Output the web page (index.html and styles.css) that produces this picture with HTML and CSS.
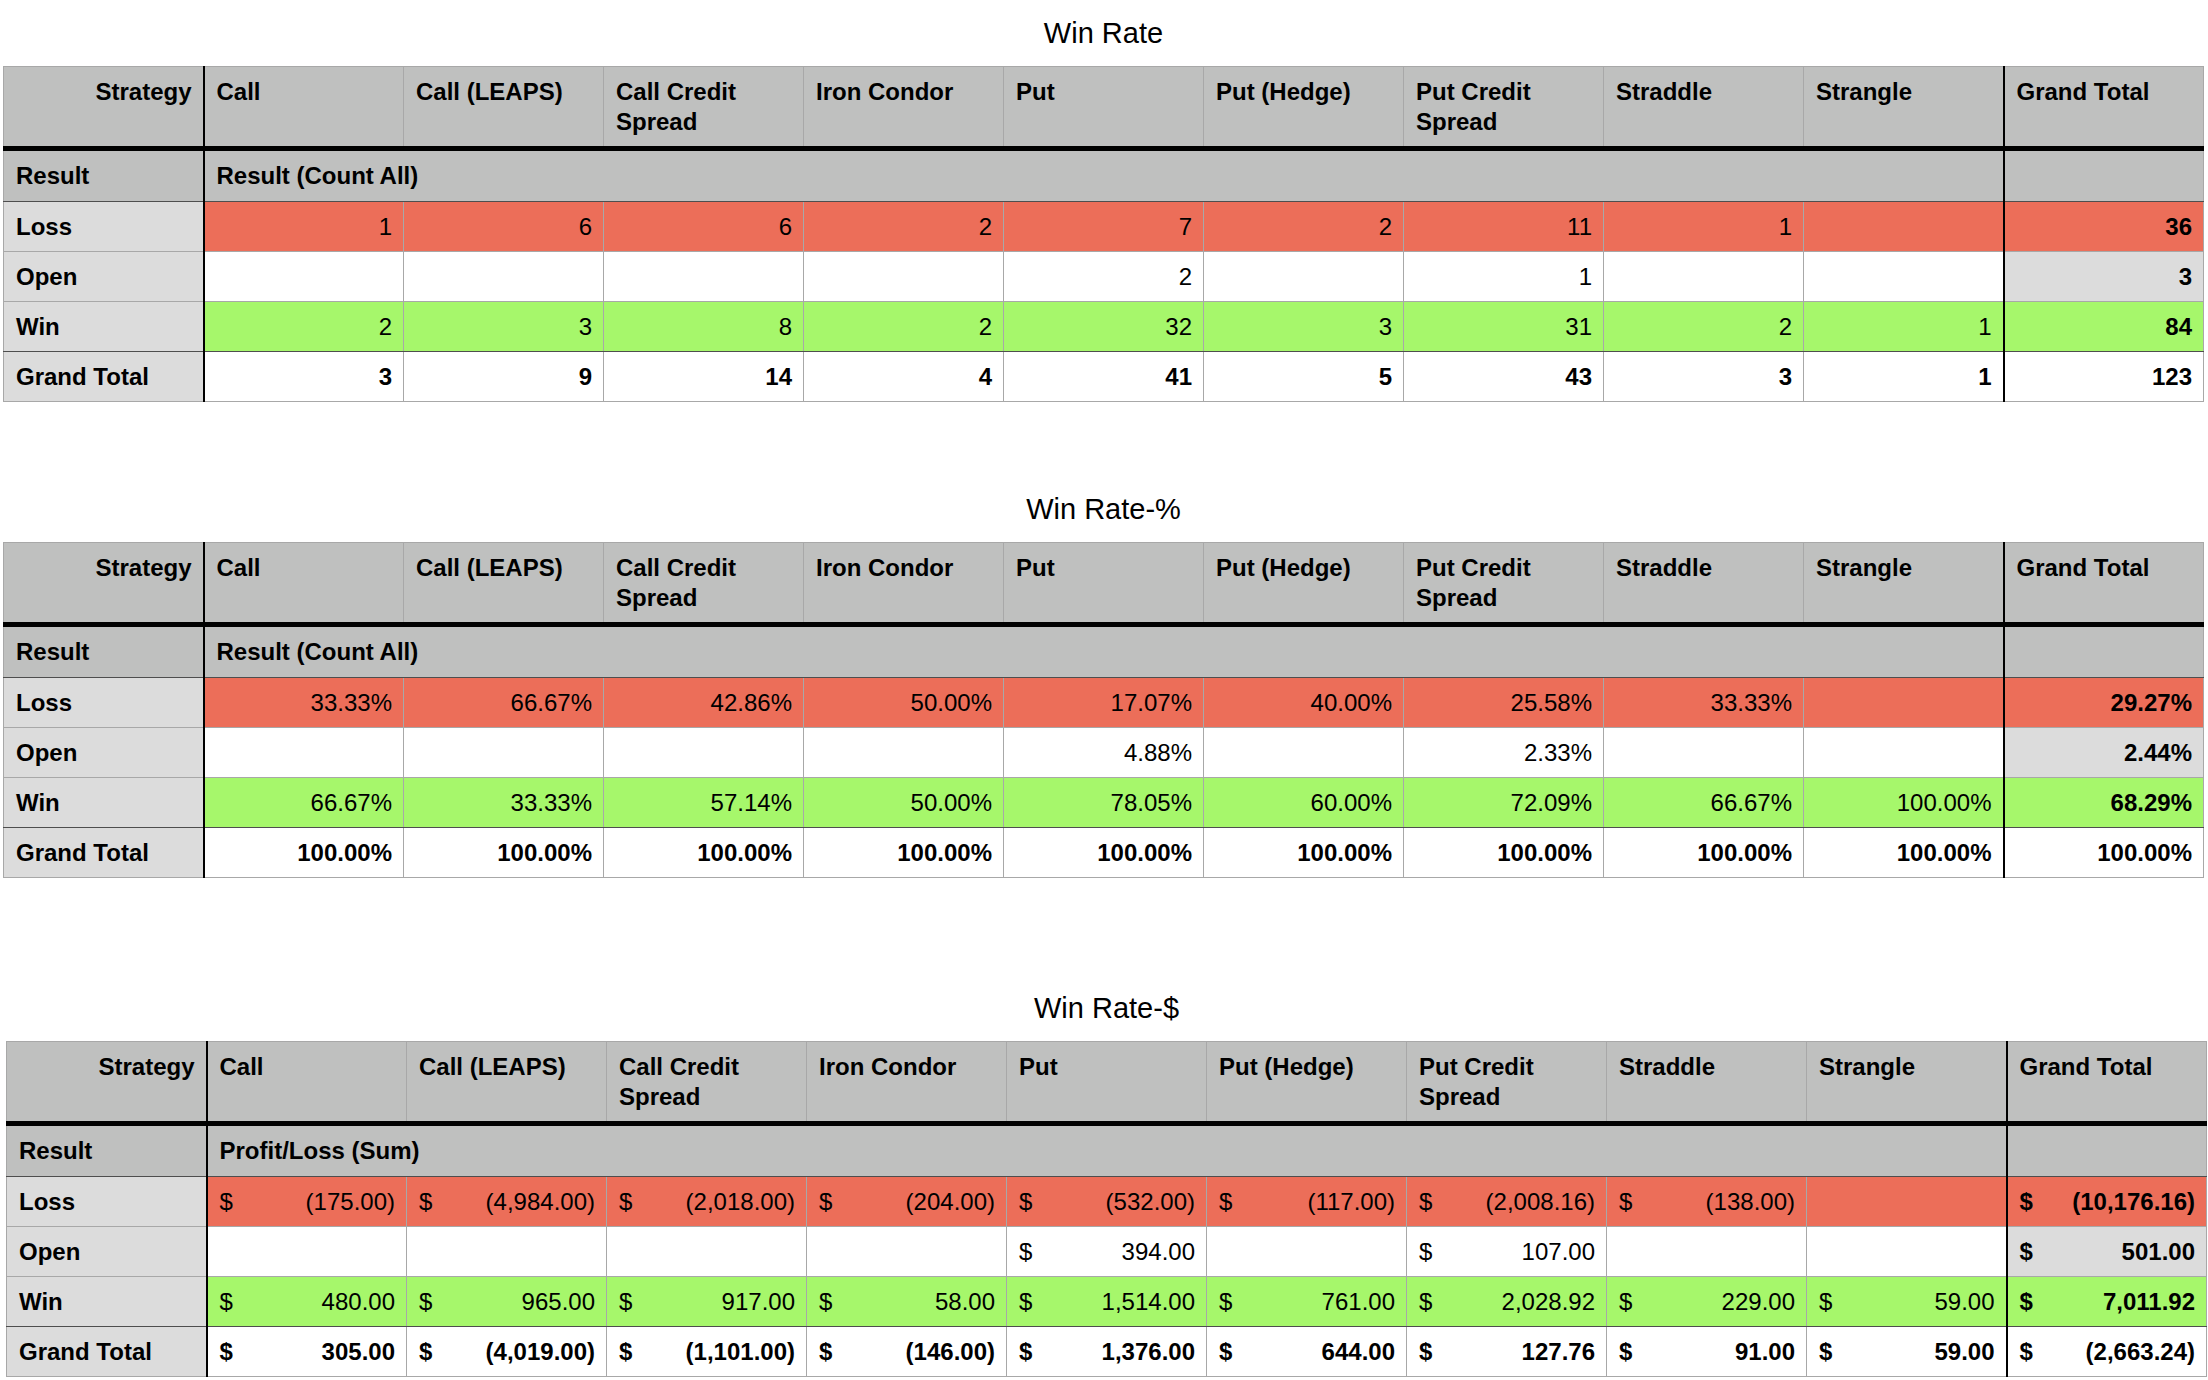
FILE: index.html
```html
<!DOCTYPE html>
<html lang="en">
<head>
<meta charset="utf-8">
<title>Win Rate</title>
<link rel="stylesheet" href="styles.css">
</head>
<body>
<main class="page">

<section class="pivot">
  <h2 class="pivot-title">Win Rate</h2>
  <table class="grid">
    <colgroup><col><col><col><col><col><col><col><col><col><col><col></colgroup>
    <thead>
      <tr>
        <th class="c-label c-strategy">Strategy</th>
        <th>Call</th><th>Call (LEAPS)</th><th>Call Credit Spread</th><th>Iron Condor</th><th>Put</th><th>Put (Hedge)</th><th>Put Credit Spread</th><th>Straddle</th><th>Strangle</th>
        <th class="c-total">Grand Total</th>
      </tr>
    </thead>
    <tbody>
      <tr class="row-result"><td class="c-label">Result</td><td colspan="9">Result (Count All)</td><td class="c-total"></td></tr>
      <tr class="row-loss"><td class="c-label">Loss</td><td>1</td><td>6</td><td>6</td><td>2</td><td>7</td><td>2</td><td>11</td><td>1</td><td></td><td class="c-total b">36</td></tr>
      <tr class="row-open"><td class="c-label">Open</td><td></td><td></td><td></td><td></td><td>2</td><td></td><td>1</td><td></td><td></td><td class="c-total b">3</td></tr>
      <tr class="row-win"><td class="c-label">Win</td><td>2</td><td>3</td><td>8</td><td>2</td><td>32</td><td>3</td><td>31</td><td>2</td><td>1</td><td class="c-total b">84</td></tr>
      <tr class="row-grand"><td class="c-label">Grand Total</td><td>3</td><td>9</td><td>14</td><td>4</td><td>41</td><td>5</td><td>43</td><td>3</td><td>1</td><td class="c-total">123</td></tr>
    </tbody>
  </table>
</section>

<section class="pivot pivot--second">
  <h2 class="pivot-title">Win Rate-%</h2>
  <table class="grid">
    <colgroup><col><col><col><col><col><col><col><col><col><col><col></colgroup>
    <thead>
      <tr>
        <th class="c-label c-strategy">Strategy</th>
        <th>Call</th><th>Call (LEAPS)</th><th>Call Credit Spread</th><th>Iron Condor</th><th>Put</th><th>Put (Hedge)</th><th>Put Credit Spread</th><th>Straddle</th><th>Strangle</th>
        <th class="c-total">Grand Total</th>
      </tr>
    </thead>
    <tbody>
      <tr class="row-result"><td class="c-label">Result</td><td colspan="9">Result (Count All)</td><td class="c-total"></td></tr>
      <tr class="row-loss"><td class="c-label">Loss</td><td>33.33%</td><td>66.67%</td><td>42.86%</td><td>50.00%</td><td>17.07%</td><td>40.00%</td><td>25.58%</td><td>33.33%</td><td></td><td class="c-total b">29.27%</td></tr>
      <tr class="row-open"><td class="c-label">Open</td><td></td><td></td><td></td><td></td><td>4.88%</td><td></td><td>2.33%</td><td></td><td></td><td class="c-total b">2.44%</td></tr>
      <tr class="row-win"><td class="c-label">Win</td><td>66.67%</td><td>33.33%</td><td>57.14%</td><td>50.00%</td><td>78.05%</td><td>60.00%</td><td>72.09%</td><td>66.67%</td><td>100.00%</td><td class="c-total b">68.29%</td></tr>
      <tr class="row-grand"><td class="c-label">Grand Total</td><td>100.00%</td><td>100.00%</td><td>100.00%</td><td>100.00%</td><td>100.00%</td><td>100.00%</td><td>100.00%</td><td>100.00%</td><td>100.00%</td><td class="c-total">100.00%</td></tr>
    </tbody>
  </table>
</section>

<section class="pivot pivot--third">
  <h2 class="pivot-title">Win Rate-$</h2>
  <table class="grid">
    <colgroup><col><col><col><col><col><col><col><col><col><col><col></colgroup>
    <thead>
      <tr>
        <th class="c-label c-strategy">Strategy</th>
        <th>Call</th><th>Call (LEAPS)</th><th>Call Credit Spread</th><th>Iron Condor</th><th>Put</th><th>Put (Hedge)</th><th>Put Credit Spread</th><th>Straddle</th><th>Strangle</th>
        <th class="c-total">Grand Total</th>
      </tr>
    </thead>
    <tbody>
      <tr class="row-result"><td class="c-label">Result</td><td colspan="9">Profit/Loss (Sum)</td><td class="c-total"></td></tr>
      <tr class="row-loss"><td class="c-label">Loss</td>
        <td><div class="money"><span>$</span><span>(175.00)</span></div></td>
        <td><div class="money"><span>$</span><span>(4,984.00)</span></div></td>
        <td><div class="money"><span>$</span><span>(2,018.00)</span></div></td>
        <td><div class="money"><span>$</span><span>(204.00)</span></div></td>
        <td><div class="money"><span>$</span><span>(532.00)</span></div></td>
        <td><div class="money"><span>$</span><span>(117.00)</span></div></td>
        <td><div class="money"><span>$</span><span>(2,008.16)</span></div></td>
        <td><div class="money"><span>$</span><span>(138.00)</span></div></td>
        <td></td>
        <td class="c-total b"><div class="money"><span>$</span><span>(10,176.16)</span></div></td>
      </tr>
      <tr class="row-open"><td class="c-label">Open</td>
        <td></td><td></td><td></td><td></td>
        <td><div class="money"><span>$</span><span>394.00</span></div></td>
        <td></td>
        <td><div class="money"><span>$</span><span>107.00</span></div></td>
        <td></td><td></td>
        <td class="c-total b"><div class="money"><span>$</span><span>501.00</span></div></td>
      </tr>
      <tr class="row-win"><td class="c-label">Win</td>
        <td><div class="money"><span>$</span><span>480.00</span></div></td>
        <td><div class="money"><span>$</span><span>965.00</span></div></td>
        <td><div class="money"><span>$</span><span>917.00</span></div></td>
        <td><div class="money"><span>$</span><span>58.00</span></div></td>
        <td><div class="money"><span>$</span><span>1,514.00</span></div></td>
        <td><div class="money"><span>$</span><span>761.00</span></div></td>
        <td><div class="money"><span>$</span><span>2,028.92</span></div></td>
        <td><div class="money"><span>$</span><span>229.00</span></div></td>
        <td><div class="money"><span>$</span><span>59.00</span></div></td>
        <td class="c-total b"><div class="money"><span>$</span><span>7,011.92</span></div></td>
      </tr>
      <tr class="row-grand"><td class="c-label">Grand Total</td>
        <td><div class="money"><span>$</span><span>305.00</span></div></td>
        <td><div class="money"><span>$</span><span>(4,019.00)</span></div></td>
        <td><div class="money"><span>$</span><span>(1,101.00)</span></div></td>
        <td><div class="money"><span>$</span><span>(146.00)</span></div></td>
        <td><div class="money"><span>$</span><span>1,376.00</span></div></td>
        <td><div class="money"><span>$</span><span>644.00</span></div></td>
        <td><div class="money"><span>$</span><span>127.76</span></div></td>
        <td><div class="money"><span>$</span><span>91.00</span></div></td>
        <td><div class="money"><span>$</span><span>59.00</span></div></td>
        <td class="c-total"><div class="money"><span>$</span><span>(2,663.24)</span></div></td>
      </tr>
    </tbody>
  </table>
</section>

</main>
</body>
</html>
```

FILE: styles.css
```css
html, body {
  margin: 0;
  padding: 0;
  background: #ffffff;
  overflow: hidden;
}

body {
  font-family: "Liberation Sans", Arial, Helvetica, sans-serif;
  color: #000000;
}

.page {
  padding-top: 15px;
}

.pivot {
  margin-left: 3px;
  width: 2201px;
}

.pivot--second {
  margin-top: 89px;
}

.pivot--third {
  margin-top: 112px;
  margin-left: 6px;
}

.pivot-title {
  margin: 0 0 15px 0;
  height: 36px;
  line-height: 36px;
  font-size: 29px;
  font-weight: 400;
  text-align: center;
}

.grid {
  border-collapse: collapse;
  table-layout: fixed;
  width: 2201px;
  font-size: 24px;
}

.grid col {
  width: 200px;
}

.grid th,
.grid td {
  border: 1px solid #a8a8a8;
  padding: 0 11px 0 12px;
  overflow: hidden;
  white-space: nowrap;
}

.grid th {
  height: 82px;
  box-sizing: border-box;
  vertical-align: top;
  padding-top: 10px;
  text-align: left;
  font-weight: 700;
  line-height: 30px;
  white-space: normal;
  background: #bfc0bf;
  border-bottom: 5px solid #000000;
}

.grid td {
  height: 50px;
  box-sizing: border-box;
  vertical-align: middle;
  text-align: right;
  font-weight: 400;
  line-height: 28px;
}

.grid .c-label {
  text-align: left;
  font-weight: 700;
  background: #dcdcdc;
  border-right: 2px solid #000000;
}

.grid th.c-strategy {
  text-align: right;
  background: #bfc0bf;
}

.grid .c-total {
  border-left: 2px solid #000000;
}

.row-result td,
.row-result td.c-label {
  height: 53px;
  background: #bfc0bf;
  text-align: left;
  font-weight: 700;
  border-bottom: 1px solid #4e4e4e;
}

.row-loss td {
  background: #ec6e59;
}

.row-win td {
  background: #a6f76b;
  border-bottom: 1px solid #4e4e4e;
}

.row-open td {
  background: #ffffff;
}

.row-open td.c-total {
  background: #dcdcdc;
}

.row-loss td.c-label,
.row-open td.c-label,
.row-win td.c-label {
  background: #dcdcdc;
}

.row-grand td {
  background: #ffffff;
  font-weight: 700;
}

.grid .b {
  font-weight: 700;
}

.money {
  display: flex;
  justify-content: space-between;
}
```
